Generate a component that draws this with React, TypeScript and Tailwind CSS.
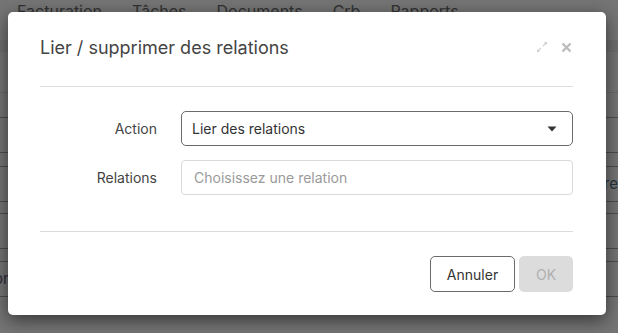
import React from "react";

const font = { fontFamily: "Inter, 'Noto Sans', sans-serif" };

function ExpandIcon() {
  return (
    <svg width="12" height="12" viewBox="0 0 12 12" fill="none">
      <path d="M7 5 L10.5 1.5" stroke="#cfcfcf" strokeWidth="1.3" />
      <path d="M8 1 H11 V4 Z" fill="#cfcfcf" />
      <path d="M5 7 L1.5 10.5" stroke="#cfcfcf" strokeWidth="1.3" />
      <path d="M1 8 V11 H4 Z" fill="#cfcfcf" />
    </svg>
  );
}

function CloseIcon() {
  return (
    <svg width="11" height="11" viewBox="0 0 11 11" fill="none">
      <path d="M1.5 1.5 L9.5 9.5 M9.5 1.5 L1.5 9.5" stroke="#bdbdbd" strokeWidth="2.4" />
    </svg>
  );
}

function Caret() {
  return (
    <svg width="10" height="6" viewBox="0 0 10 6">
      <path d="M0.5 0.5 H9.5 L5 5.5 Z" fill="#333" />
    </svg>
  );
}

export default function App() {
  return (
    <div className="relative w-[618px] h-[333px] overflow-hidden bg-white" style={font}>
      {/* background page */}
      <div className="flex gap-[30px] pl-[17px] pt-px text-[16px] leading-5 text-[#6e6e6e]">
        <span>Facturation</span>
        <span>Tâches</span>
        <span>Documents</span>
        <span>Crb</span>
        <span>Rapports</span>
      </div>
      <div className="mt-[19px] flex flex-col">
        <div className="h-[12px] bg-[#efefef]" />
        <div className="h-[41px] border-b border-[#e3e3e3]" />
        <div className="h-[25px] border-b border-[#a9a9a9]" />
        <div className="h-[35px] border-b border-[#a9a9a9]" />
        <div className="h-[14px] border-b border-[#a9a9a9]" />
        <div className="h-[35px] border-b border-[#a9a9a9] flex items-center justify-end text-[15px] text-[#5a6f86]">re</div>
        <div className="h-[12px] border-b border-[#a9a9a9]" />
        <div className="h-[35px] border-b border-[#a9a9a9]" />
        <div className="h-[13px] border-b border-[#a9a9a9]" />
        <div className="h-[35px] border-b border-[#a9a9a9] flex items-center text-[15px] text-[#6a5a86] -ml-[6px]">on</div>
      </div>

      {/* overlay */}
      <div className="absolute inset-0 bg-[rgba(0,0,0,0.54)] pt-[12px] pl-[8px]">
        <div className="w-[598px] h-[303px] bg-white rounded-[5px] shadow-[0_5px_18px_rgba(0,0,0,0.55)] px-[32px] pt-[24px] flex flex-col">
          <div className="flex items-center justify-between h-[24px] w-[533px]">
            <h2 className="text-[18px] leading-6 text-[#444]">Lier / supprimer des relations</h2>
            <div className="flex items-center gap-[13px] pr-[1px] -mt-[2px]">
              <ExpandIcon />
              <CloseIcon />
            </div>
          </div>
          <div className="mt-[26px] h-px bg-[#dcdcdc] w-[533px]" />

          <div className="mt-[24px] flex flex-col gap-[14px] w-[533px]">
            <div className="flex items-center">
              <label className="w-[117px] text-right text-[14px] text-[#444]">Action</label>
              <div className="ml-[24px] flex-1 h-[35px] border border-[#6b6b6b] rounded-[5px] flex items-center justify-between pl-[10px] pr-[15px] text-[14px] text-[#333]">
                <span>Lier des relations</span>
                <Caret />
              </div>
            </div>
            <div className="flex items-center">
              <label className="w-[117px] text-right text-[14px] text-[#444]">Relations</label>
              <div className="ml-[24px] flex-1 h-[35px] border border-[#d9d9d9] rounded-[4px] flex items-center pl-[12px] text-[14px] text-[#9a9a9a]">
                Choisissez une relation
              </div>
            </div>
          </div>

          <div className="mt-[36px] h-px bg-[#dcdcdc] w-[533px]" />

          <div className="mt-[24px] flex justify-end gap-[4px] w-[533px]">
            <button className="w-[85px] h-[36px] border border-[#6b6b6b] rounded-[5px] text-[14px] text-[#333] bg-white">Annuler</button>
            <button className="w-[54px] h-[36px] rounded-[5px] text-[14px] text-[#b0b0b0] bg-[#dcdcdc]">OK</button>
          </div>
        </div>
      </div>
    </div>
  );
}
